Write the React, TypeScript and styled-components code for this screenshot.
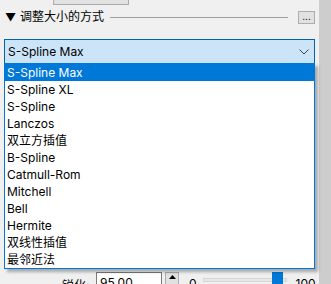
import React from 'react';
import styled, { createGlobalStyle } from 'styled-components';

const GlobalStyle = createGlobalStyle`
  html, body {
    margin: 0;
    padding: 0;
    background: #f0f0f0;
    overflow: hidden;
  }
  body {
    font-family: Inter, "Noto Sans CJK SC", sans-serif;
    font-size: 12px;
    color: #000;
  }
`;

const Window = styled.div`
  display: flex;
  width: 331px;
  height: 284px;
  overflow: hidden;
`;

const Panel = styled.div`
  display: flex;
  flex-direction: column;
  width: 319px;

  & > * {
    flex-shrink: 0;
  }
`;

const ScrollStrip = styled.div`
  width: 12px;
  background: #cdcdcd;
`;

const StubButton = styled.div`
  margin-left: 53px;
  width: 74px;
  height: 4px;
  border: 1px solid #adadad;
  border-top: none;
  background: #e1e1e1;
`;

const Header = styled.div`
  display: flex;
  align-items: center;
  height: 16px;
  margin: 4px 0 0 5px;
  gap: 4px;
`;

const Triangle = styled.span`
  font-size: 11px;
  line-height: 1;
  width: 11px;
`;

const Title = styled.span`
  font-size: 12px;
  line-height: 16px;
  white-space: nowrap;
`;

const Rule = styled.div`
  flex: 0 0 178px;
  height: 1px;
  background: #a0a0a0;
  margin-left: 2px;
`;

const DotsButton = styled.div`
  margin-left: 6px;
  width: 15px;
  height: 11px;
  border: 1px solid #adadad;
  background: #e1e1e1;
  font-size: 10px;
  line-height: 8px;
  text-align: center;
  color: #000;
`;

const ComboWrap = styled.div`
  position: relative;
  margin: 14px 0 0 4px;
  width: 311px;
`;

const Combo = styled.div`
  display: flex;
  align-items: center;
  justify-content: space-between;
  height: 25px;
  padding: 0 5px 0 3px;
  border: 1px solid #0063b1;
  background: #cce4f7;
  box-sizing: border-box;
`;

const List = styled.div`
  position: absolute;
  left: 0;
  top: 24px;
  width: 311px;
  box-sizing: border-box;
  border: 1px solid #0078d7;
  background: #fff;
  box-shadow: 3px 3px 3px rgba(0, 0, 0, 0.3);
  z-index: 2;
`;

const Item = styled.div<{ $selected?: boolean }>`
  height: 17px;
  line-height: 17px;
  padding-left: 2px;
  white-space: nowrap;
  background: ${p => (p.$selected ? '#0078d7' : '#fff')};
  color: ${p => (p.$selected ? '#fff' : '#000')};
`;

const BottomRow = styled.div`
  display: flex;
  align-items: flex-start;
  margin-top: 208px;
  height: 20px;
`;

const Label = styled.span`
  margin: 4px 0 0 62px;
  width: 34px;
`;

const NumberBox = styled.div`
  width: 66px;
  height: 20px;
  box-sizing: border-box;
  border: 1px solid #7a7a7a;
  background: #fff;
  padding: 3px 0 0 3px;
  line-height: 14px;
`;

const Spin = styled.div`
  display: flex;
  justify-content: center;
  margin-left: 3px;
  width: 14px;
  height: 20px;
  box-sizing: border-box;
  border: 1px solid #adadad;
  background: #e1e1e1;
  padding-top: 2px;
`;

const RangeText = styled.span<{ $gap: number }>`
  margin: 4px 0 0 ${p => p.$gap}px;
`;

const Slider = styled.div`
  position: relative;
  margin: 6px 0 0 6px;
  width: 84px;
  height: 4px;
  box-sizing: border-box;
  border: 1px solid #d6d6d6;
  background: #e7e7e7;
`;

const Thumb = styled.div`
  position: absolute;
  left: 68px;
  top: -7px;
  width: 11px;
  height: 20px;
  background: #0078d7;
`;

const Chevron = () => (
  <svg width="10" height="6" viewBox="0 0 10 6">
    <path d="M0.5 0.5 L5 5 L9.5 0.5" fill="none" stroke="#404040" strokeWidth="1" />
  </svg>
);

const UpArrow = () => (
  <svg width="7" height="4" viewBox="0 0 7 4">
    <path d="M0 4 L3.5 0 L7 4 Z" fill="#000" />
  </svg>
);

const options = [
  'S-Spline Max',
  'S-Spline XL',
  'S-Spline',
  'Lanczos',
  '双立方插值',
  'B-Spline',
  'Catmull-Rom',
  'Mitchell',
  'Bell',
  'Hermite',
  '双线性插值',
  '最邻近法',
];

export default function App() {
  return (
    <>
      <GlobalStyle />
      <Window>
        <Panel>
          <StubButton />
          <Header>
            <Triangle>▼</Triangle>
            <Title>调整大小的方式</Title>
            <Rule />
            <DotsButton>...</DotsButton>
          </Header>
          <ComboWrap>
            <Combo>
              <span>S-Spline Max</span>
              <Chevron />
            </Combo>
            <List>
              {options.map((o, i) => (
                <Item key={o} $selected={i === 0}>
                  {o}
                </Item>
              ))}
            </List>
          </ComboWrap>
          <BottomRow>
            <Label>锐化:</Label>
            <NumberBox>95.00</NumberBox>
            <Spin>
              <UpArrow />
            </Spin>
            <RangeText $gap={10}>0</RangeText>
            <Slider>
              <Thumb />
            </Slider>
            <RangeText $gap={9}>100</RangeText>
          </BottomRow>
        </Panel>
        <ScrollStrip />
      </Window>
    </>
  );
}
